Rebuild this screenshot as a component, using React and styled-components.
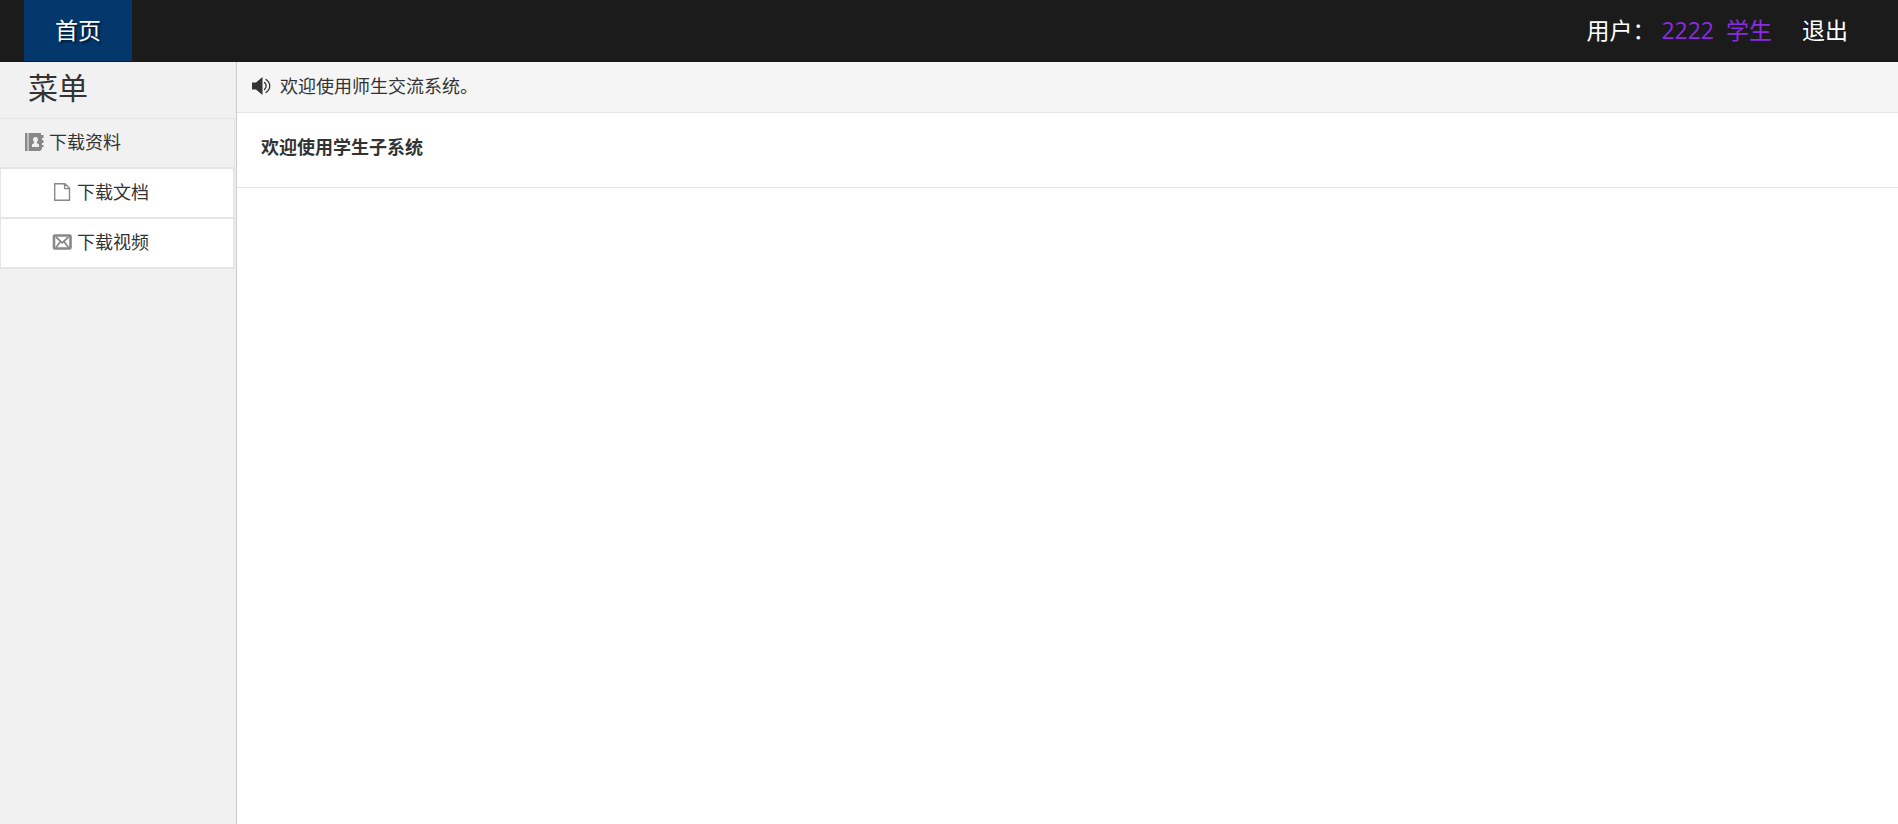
import styled, { createGlobalStyle } from "styled-components";

const GlobalStyle = createGlobalStyle`
    * {
        box-sizing: border-box;
    }
    body {
        margin: 0;
        background: #fff;
        color: #333;
        font-family: "Open Sans", "Noto Sans CJK SC", sans-serif;
        font-size: 18px;
        line-height: 24px;
    }
`;

const ContactIcon = () => (
    <Icon viewBox="0 0 20 20">
        <path
            fill="#888"
            fillRule="evenodd"
            d="M1 1h2.500v18H1zM4.500 1H17v2h2.500v3H18v2h1.500v3H18v2h1.500v2H18v2l-2 2H4.500zM11.500 5C10 5 9 6 9 7.500c0 1.200.6 2 1.200 2.600v1L8 12.500V15h7v-2.500l-2.200-1.400v-1c.7-.6 1.200-1.400 1.200-2.600C14 6 13 5 11.500 5z"
        />
    </Icon>
);

const FileIcon = () => (
    <Icon viewBox="0 0 20 20">
        <path
            fill="none"
            stroke="#888"
            strokeWidth="1.4"
            strokeLinejoin="round"
            d="M2.700 1.700H13l4.500 4.500V18.300H2.700zM12.600 2v4.600h4.900"
        />
    </Icon>
);

const MailIcon = () => (
    <Icon viewBox="0 0 20 20">
        <rect x="2" y="3.500" width="16.500" height="13" rx="1" fill="none" stroke="#888" strokeWidth="2.600" />
        <path fill="none" stroke="#888" strokeWidth="1.800" d="M4 5l6.200 5.800L16.500 5M4 15.500l4.500-6M16.500 15.500l-4.500-6" />
    </Icon>
);

const SpeakerIcon = () => (
    <Icon viewBox="0 0 20 20">
        <path fill="#333" d="M1 6.500h4L11.500 1v18L5 13.500H1z" />
        <path fill="none" stroke="#333" strokeWidth="1.300" strokeLinecap="round" d="M13.500 6.500c2.200 2 2.200 5 0 7M15 3.500c5 3.500 5 9.500 0 13" />
    </Icon>
);

const App = () => {
    return (
        <Page>
            <GlobalStyle />
            <Header>
                <HomeLink href="#">首页</HomeLink>
                <UserInfo>
                    <span>用户：</span>
                    <UserLinks>
                        <UserLink href="#">2222</UserLink>
                        <UserLink href="#">学生</UserLink>
                    </UserLinks>
                    <LogoutLink href="#">退出</LogoutLink>
                </UserInfo>
            </Header>
            <Body>
                <Sidebar>
                    <MenuTitle>菜单</MenuTitle>
                    <Menu>
                        <MenuLink href="#">
                            <ContactIcon />
                            下载资料
                        </MenuLink>
                        <MenuLink href="#" $sub>
                            <FileIcon />
                            下载文档
                        </MenuLink>
                        <MenuLink href="#" $sub>
                            <MailIcon />
                            下载视频
                        </MenuLink>
                    </Menu>
                </Sidebar>
                <Main>
                    <Notice>
                        <SpeakerIcon />
                        欢迎使用师生交流系统。
                    </Notice>
                    <Welcome>欢迎使用学生子系统</Welcome>
                </Main>
            </Body>
        </Page>
    );
};

const Page = styled.div`
    display: flex;
    flex-direction: column;
    min-height: 100vh;
`;

const Header = styled.header`
    display: flex;
    justify-content: space-between;
    height: 62px;
    padding: 0 50px 0 24px;
    background: #1b1b1b;
    border-bottom: 1px solid #1a151c;
    color: #fff;
    font-size: 23px;
`;

const HomeLink = styled.a`
    display: flex;
    align-items: center;
    padding: 0 31px 2px;
    background: #04386c;
    color: #fff;
    text-decoration: none;
    text-shadow: 2px 2px 2px rgba(0, 0, 0, 0.6);
`;

const UserInfo = styled.div`
    display: flex;
    align-items: center;
    padding-bottom: 2px;
`;

const UserLinks = styled.div`
    display: flex;
    gap: 12px;
    margin: 0 30px 0 6px;
`;

const UserLink = styled.a`
    color: #8a2be2;
    text-decoration: none;
`;

const LogoutLink = styled.a`
    color: #fff;
    text-decoration: none;
`;

const Body = styled.div`
    display: flex;
    flex: 1;
`;

const Sidebar = styled.aside`
    flex: none;
    width: 237px;
    background: #f1f1f1;
    border-right: 1px solid #ccc;
`;

const MenuTitle = styled.h2`
    margin: 0;
    padding: 6px 28px 10px;
    font-size: 30px;
    font-weight: 400;
    line-height: 40px;
`;

const Menu = styled.nav`
    width: 235px;
    border: solid #e5e5e5;
    border-width: 0 1px 1px 0;
`;

const MenuLink = styled.a`
    display: flex;
    align-items: center;
    gap: 5px;
    height: 50px;
    padding-bottom: 2px;
    padding-left: ${(props) => (props.$sub ? "51px" : "24px")};
    background: ${(props) => (props.$sub ? "#fff" : "#f1f1f1")};
    border: 1px solid #e5e5e5;
    border-width: ${(props) => (props.$sub ? "1px" : "1px 0")};
    color: #333;
    text-decoration: none;
`;

const Main = styled.main`
    flex: 1;
`;

const Notice = styled.div`
    display: flex;
    align-items: center;
    gap: 9px;
    height: 51px;
    padding: 0 14px 2px;
    background: #f5f5f5;
    border-bottom: 1px solid #e5e5e5;
`;

const Welcome = styled.h1`
    margin: 0;
    padding: 22px 24px 28px;
    border-bottom: 1px solid #e5e5e5;
    font-size: 18px;
    line-height: 24px;
`;

const Icon = styled.svg`
    flex: none;
    width: 20px;
    height: 20px;
`;

export default App;
